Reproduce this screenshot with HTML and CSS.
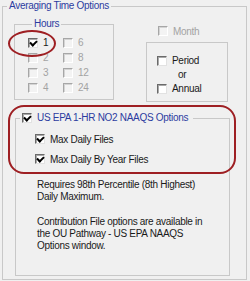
FILE: index.html
```html
<!DOCTYPE html>
<html lang="en">
<head>
    <meta charset="UTF-8">
    <title>Averaging Time Options</title>
    <link rel="stylesheet" href="styles.css">
</head>
<body>
    <fieldset class="group outer">
        <legend>Averaging Time Options</legend>
        <div class="top-row">
            <fieldset class="group hours">
                <legend>Hours</legend>
                <div class="hours-grid">
                    <label class="opt"><span class="cb on"></span>1</label>
                    <label class="opt off"><span class="cb"></span>6</label>
                    <label class="opt off"><span class="cb"></span>2</label>
                    <label class="opt off"><span class="cb"></span>8</label>
                    <label class="opt off"><span class="cb"></span>3</label>
                    <label class="opt off"><span class="cb"></span>12</label>
                    <label class="opt off"><span class="cb"></span>4</label>
                    <label class="opt off"><span class="cb"></span>24</label>
                </div>
            </fieldset>
            <div class="side">
                <label class="opt off month"><span class="cb"></span>Month</label>
                <div class="period-box">
                    <label class="opt"><span class="cb"></span>Period</label>
                    <div class="or">or</div>
                    <label class="opt"><span class="cb"></span>Annual</label>
                </div>
            </div>
        </div>
        <fieldset class="group naaqs">
            <legend><label class="opt"><span class="cb on"></span>US EPA 1-HR NO2 NAAQS Options</label></legend>
            <div class="files">
                <label class="opt"><span class="cb on"></span>Max Daily Files</label>
                <label class="opt"><span class="cb on"></span>Max Daily By Year Files</label>
            </div>
            <p>Requires 98th Percentile (8th Highest)<br>Daily Maximum.</p>
            <p>Contribution File options are available in<br>the OU Pathway - US EPA NAAQS<br>Options window.</p>
        </fieldset>
    </fieldset>

    <!-- red call-outs drawn over the dialog -->
    <div class="mark mark-hour"></div>
    <div class="mark mark-naaqs"></div>
</body>
</html>
```

FILE: styles.css
```css
* {
    margin: 0;
    padding: 0;
    box-sizing: border-box;
}

body {
    width: 250px;
    height: 281px;
    overflow: hidden;
    position: relative;
    background: #f0f0f0;
    font-family: "Liberation Sans", Arial, sans-serif;
    font-size: 10px;
    letter-spacing: -0.3px;
    color: #1a1a1a;
}

.group {
    border: 1px solid #c8c8c8;
    min-width: 0;
}

.group > legend {
    color: #2c3ca0;
    line-height: 12px;
    padding: 0 2px;
    margin-left: 4px;
}

.outer {
    margin: 0 3px 0 2px;
    padding: 0 0 3px 0;
}

.top-row {
    display: flex;
    align-items: flex-start;
    padding-left: 11px;
}

.hours {
    margin-top: 6px;
    width: 100px;
    padding: 5px 0 4px 13px;
}

.hours-grid {
    display: grid;
    grid-template-columns: 35px auto;
    grid-auto-rows: 15px;
}

.opt {
    display: flex;
    align-items: center;
    gap: 5px;
}

.off {
    color: #a3a3a3;
}

.cb {
    position: relative;
    flex: none;
    width: 10px;
    height: 10px;
    background: #fff;
    border: 1px solid;
    border-color: #6a6a6a #e2e2e2 #e2e2e2 #6a6a6a;
    box-shadow: inset 1px 1px 0 #a8a8a8;
}

.off .cb {
    background: #f3f3f3;
    border-color: #a6a6a6 #fff #fff #a6a6a6;
    box-shadow: inset 1px 1px 0 #d4d4d4;
}

.cb.on::after {
    content: '';
    position: absolute;
    left: 2px;
    top: 0;
    width: 3px;
    height: 5px;
    border: solid #000;
    border-width: 0 2px 2px 0;
    transform: rotate(45deg);
}

.side {
    margin-left: 32px;
}

.month {
    height: 12px;
    margin: 13px 0 5px 12px;
}

.period-box {
    width: 82px;
    border: 1px solid #c8c8c8;
    padding: 11px 0 5px 10px;
}

.period-box .opt,
.or {
    height: 14px;
    line-height: 14px;
}

.or {
    padding-left: 21px;
}

.naaqs {
    width: 215px;
    margin: 10px 0 0 12px;
    padding: 8px 0 23px 0;
}

.naaqs > legend {
    padding: 0 5px 0 2px;
    color: #2c3ca0;
}

.files {
    display: flex;
    flex-direction: column;
    gap: 6px;
    padding-left: 19px;
}

.files .opt {
    height: 14px;
}

.naaqs p {
    margin-top: 13px;
    padding-left: 21px;
    line-height: 12px;
}

.mark {
    position: absolute;
    border: 2px solid #9e1f23;
}

.mark-hour {
    left: 8px;
    top: 30px;
    width: 48px;
    height: 27px;
    border-radius: 50%;
}

.mark-naaqs {
    left: 8px;
    top: 105px;
    width: 228px;
    height: 69px;
    border-radius: 16px;
}
```
